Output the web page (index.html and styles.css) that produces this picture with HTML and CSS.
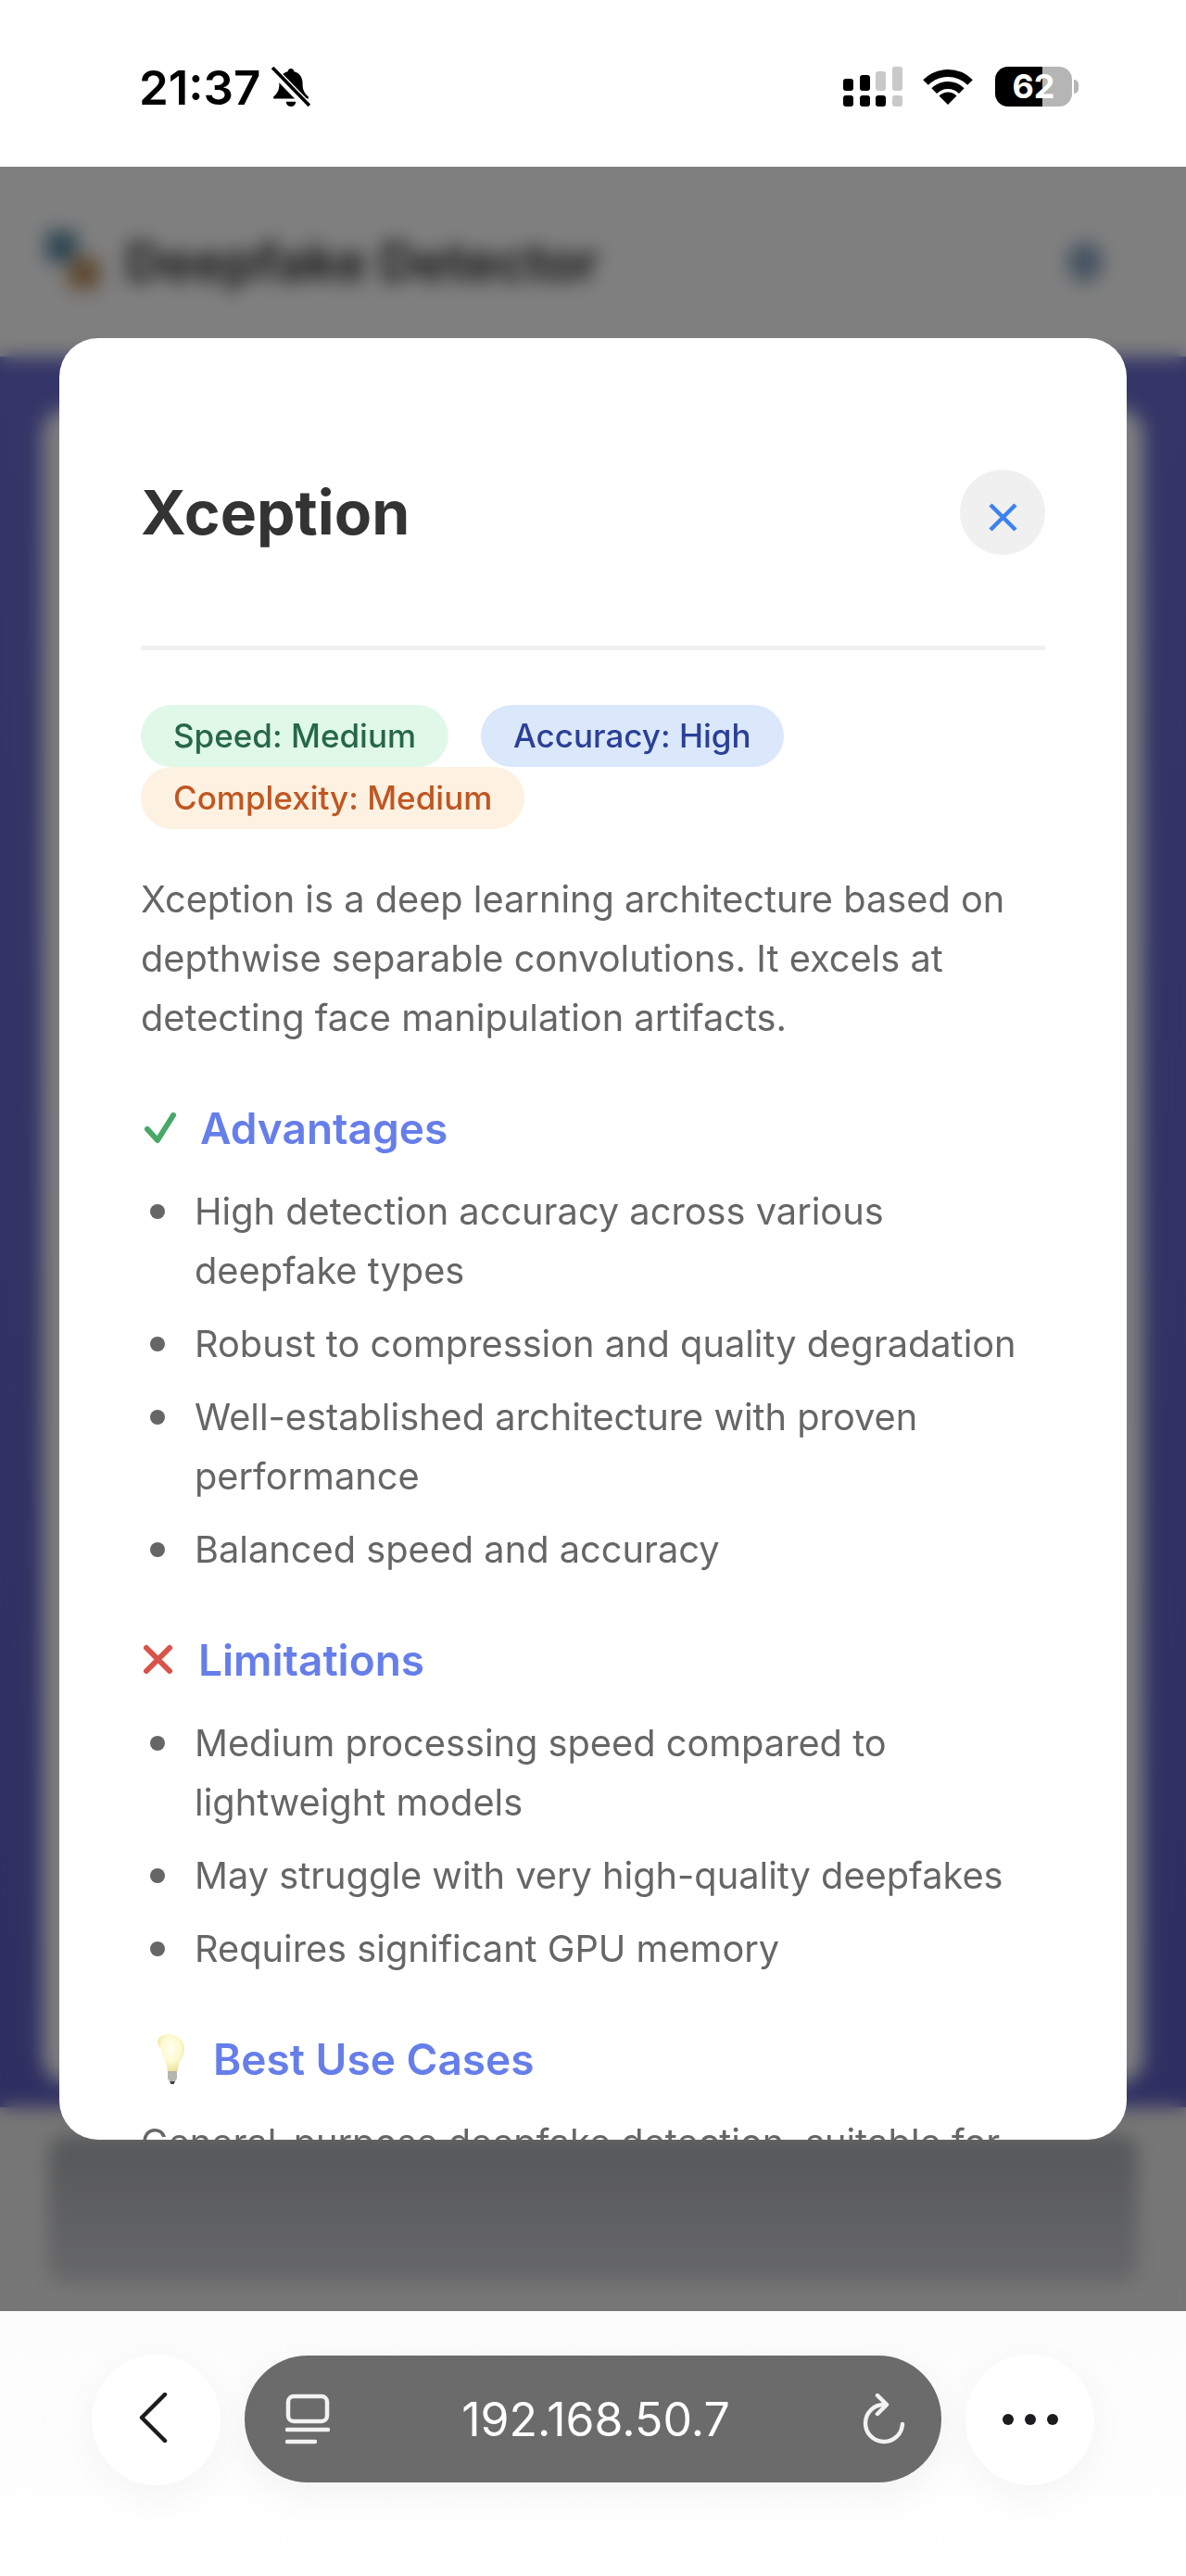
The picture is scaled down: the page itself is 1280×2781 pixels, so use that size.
FILE: index.html
```html
<!DOCTYPE html>
<html lang="en">
<head>
    <meta charset="UTF-8">
    <meta name="viewport" content="width=device-width, initial-scale=1.0">
    <title>Deepfake Detector</title>
    <link rel="stylesheet" href="styles.css">
</head>
<body>
    <div class="status-bar">
        <div class="status-left">
            <span class="clock">21:37</span>
            <svg class="bell" viewBox="0 0 40 42">
                <path d="M20 2c2 0 3 1.500 3.300 3 6 1.500 8.700 6.500 8.700 12 0 7 1.500 10 6 14v2H2v-2c4.500-4 6-7 6-14 0-5.500 2.700-10.500 8.700-12C17 3.500 18 2 20 2z"/>
                <path d="M15 36h10a5 5 0 0 1-10 0z"/>
                <path class="bell-gap" d="M2 4l36 37"/>
                <path class="bell-slash" d="M1 1l38 39"/>
            </svg>
        </div>
        <div class="status-right">
            <svg class="signal" viewBox="0 0 64 43">
                <rect x="0" y="13" width="11" height="13" rx="3"/>
                <rect x="18" y="9" width="11" height="17" rx="3"/>
                <rect class="off" x="35" y="5" width="11" height="21" rx="3"/>
                <rect class="off" x="53" y="0" width="11" height="26" rx="3"/>
                <rect x="0" y="31" width="11" height="12" rx="3"/>
                <rect x="18" y="31" width="11" height="12" rx="3"/>
                <rect x="35" y="31" width="11" height="12" rx="3"/>
                <rect class="off" x="53" y="31" width="11" height="12" rx="3"/>
            </svg>
            <svg class="wifi" viewBox="0 0 56 40">
                <path d="M4 16a34 34 0 0 1 48 0"/>
                <path d="M13.200 25.200a21 21 0 0 1 29.600 0"/>
                <path class="wedge" d="M28 40l-9.500-9.500a13.400 13.400 0 0 1 19 0z"/>
            </svg>
            <div class="battery"><span class="battery-level">62</span><i class="battery-nub"></i></div>
        </div>
    </div>

    <div class="viewport">
        <div class="page">
            <header class="page-header">
                <svg class="page-logo" viewBox="0 0 60 60">
                    <rect x="4" y="2" width="28" height="28" fill="#5a8aa4"/>
                    <rect x="24" y="26" width="28" height="28" fill="#bd9060"/>
                </svg>
                <span class="page-title">Deepfake Detector</span>
                <i class="page-dot"></i>
            </header>
            <main class="page-main">
                <div class="page-card"></div>
            </main>
            <footer class="page-footer">
                <div class="footer-card"></div>
            </footer>
        </div>

        <div class="overlay">
            <div class="modal">
                <div class="modal-header">
                    <h2>Xception</h2>
                    <button class="close-btn">
                        <svg viewBox="0 0 92 92"><path d="M33 38l27 27M60 38L33 65"/></svg>
                    </button>
                </div>

                <div class="tags">
                    <span class="tag tag-speed">Speed: Medium</span>
                    <span class="tag tag-accuracy">Accuracy: High</span>
                    <span class="tag tag-complexity">Complexity: Medium</span>
                </div>

                <p class="intro">Xception is a deep learning architecture based on depthwise separable convolutions. It excels at detecting face manipulation artifacts.</p>

                <h3>
                    <svg class="icon-check" viewBox="0 0 64 40"><path d="M7 21l11 12L35 6"/></svg>
                    Advantages
                </h3>
                <ul>
                    <li>High detection accuracy across various deepfake types</li>
                    <li>Robust to compression and quality degradation</li>
                    <li>Well-established architecture with proven performance</li>
                    <li>Balanced speed and accuracy</li>
                </ul>

                <h3>
                    <svg class="icon-cross" viewBox="0 0 62 40"><path d="M6 7l25 25M31 7L6 32"/></svg>
                    Limitations
                </h3>
                <ul>
                    <li>Medium processing speed compared to lightweight models</li>
                    <li>May struggle with very high-quality deepfakes</li>
                    <li>Requires significant GPU memory</li>
                </ul>

                <h3>
                    <svg class="icon-bulb" viewBox="0 0 78 60">
                        <defs>
                            <radialGradient id="glass" cx="50%" cy="40%" r="60%">
                                <stop offset="0" stop-color="#fffff4"/>
                                <stop offset="0.6" stop-color="#fdf9cf"/>
                                <stop offset="1" stop-color="#ece29a"/>
                            </radialGradient>
                        </defs>
                        <path fill="url(#glass)" d="M30 2c9.500 0 17 7.500 17 16.500 0 7-5 11-6.500 17.500-.5 2.500-.5 4-1 6H29c-.5-2-.5-3.500-1-6-1.500-6.500-6-10.500-6-17.500C13 9.500 20.500 2 30 2z" transform="translate(0 1)"/>
                        <path fill="#b4b4b0" d="M29 43h10v8l-2 3h-6l-2-3z"/>
                        <path fill="#444" d="M31 54h6l-1.500 3h-3z"/>
                    </svg>
                    Best Use Cases
                </h3>
                <p class="use-cases">General-purpose deepfake detection, suitable for most applications.</p>
            </div>
        </div>
    </div>

    <div class="toolbar">
        <button class="round-btn">
            <svg class="icon-back" viewBox="0 0 32 54"><path d="M29 2L4 27l25 25"/></svg>
        </button>
        <div class="url-bar">
            <svg class="icon-tabs" viewBox="0 0 48 56">
                <rect x="3" y="3" width="42" height="27" rx="6"/>
                <path d="M2 39h44M2 52h30"/>
            </svg>
            <span class="url-text">192.168.50.7</span>
            <svg class="icon-reload" viewBox="0 0 48 56">
                <path d="M24 12a20 20 0 1 0 20 21"/>
                <path d="M17 2l10 10-10 10"/>
            </svg>
        </div>
        <button class="round-btn">
            <svg class="icon-more" viewBox="0 0 60 12">
                <circle cx="6" cy="6" r="6"/>
                <circle cx="30" cy="6" r="6"/>
                <circle cx="54" cy="6" r="6"/>
            </svg>
        </button>
    </div>
</body>
</html>
```

FILE: styles.css
```css
* {
    box-sizing: border-box;
}
body {
    margin: 0;
    width: 1280px;
    height: 2781px;
    display: flex;
    flex-direction: column;
    background: #ffffff;
    font-family: 'Inter', 'Liberation Sans', sans-serif;
    overflow: hidden;
}

/* status bar */
.status-bar {
    height: 180px;
    flex-shrink: 0;
    background: #ffffff;
    display: flex;
    justify-content: space-between;
    padding: 72px 123px 0 150px;
}
.status-left {
    display: flex;
    align-items: flex-start;
    gap: 12px;
}
.clock {
    font-size: 51px;
    font-weight: 600;
    line-height: 46px;
    color: #000000;
}
.bell {
    width: 42px;
    height: 44px;
    fill: #000000;
}
.bell-gap {
    fill: none;
    stroke: #ffffff;
    stroke-width: 9;
}
.bell-slash {
    fill: none;
    stroke: #000000;
    stroke-width: 3.5;
}
.status-right {
    display: flex;
    align-items: flex-start;
}
.signal {
    width: 64px;
    height: 43px;
    fill: #000000;
}
.signal .off {
    fill: #c9c9c9;
}
.wifi {
    width: 56px;
    height: 40px;
    margin: 1px 23px 0 21px;
    fill: none;
    stroke: #000000;
    stroke-width: 8;
}
.wifi .wedge {
    fill: #000000;
    stroke: none;
}
.battery {
    width: 83px;
    height: 43px;
    position: relative;
    border-radius: 14px;
    background: linear-gradient(90deg, #000000 62%, #b5b5b5 62%);
    text-align: center;
}
.battery-level {
    font-size: 36px;
    font-weight: 700;
    line-height: 43px;
    color: #ffffff;
}
.battery-nub {
    position: absolute;
    left: 85px;
    top: 14px;
    width: 5px;
    height: 15px;
    border-radius: 0 5px 5px 0;
    background: #b5b5b5;
}

/* page behind the modal */
.viewport {
    flex: 1;
    position: relative;
    overflow: hidden;
}
.page {
    height: 100%;
    display: flex;
    flex-direction: column;
}
.page-header {
    height: 205px;
    background: #ffffff;
    display: flex;
    align-items: center;
    padding: 0 90px 0 45px;
}
.page-logo {
    width: 72px;
    height: 72px;
}
.page-title {
    margin-left: 18px;
    font-size: 56px;
    font-weight: 700;
    color: #333333;
    flex: 1;
}
.page-dot {
    width: 38px;
    height: 44px;
    border-radius: 50%;
    background: #8aa6c4;
}
.page-main {
    flex: 1;
    background: linear-gradient(#6a6cd0, #5e5ec4);
    padding: 55px 46px 25px;
}
.page-card {
    height: 100%;
    background: #ffffff;
    border-radius: 30px;
}
.page-footer {
    height: 220px;
    background: #eeeeee;
    padding: 30px 52px 30px;
}
.footer-card {
    height: 100%;
    background: linear-gradient(#acaeb2, #cecfd3);
    border-radius: 20px;
}
.overlay {
    position: absolute;
    inset: 0;
    display: flex;
    padding: 185px 64px;
    background: rgba(0, 0, 0, 0.5);
    backdrop-filter: blur(10px);
}

/* modal */
.modal {
    flex: 1;
    background: #ffffff;
    border-radius: 42px;
    padding: 142px 88px 0;
    overflow: hidden;
    color: #666666;
    font-size: 39.75px;
    line-height: 64px;
}
.modal-header {
    display: flex;
    justify-content: space-between;
    align-items: center;
    padding-bottom: 98px;
    border-bottom: 5px solid #f0f0f0;
}
.modal-header h2 {
    margin: 0;
    font-size: 66px;
    font-weight: 700;
    line-height: 92px;
    color: #333333;
}
.close-btn {
    width: 92px;
    height: 92px;
    padding: 0;
    border: none;
    border-radius: 50%;
    background: #f0f0f0;
}
.close-btn svg {
    display: block;
    fill: none;
    stroke: #3b82f0;
    stroke-width: 4.5;
}
.tags {
    display: flex;
    flex-wrap: wrap;
    column-gap: 35px;
    margin-top: 59px;
}
.tag {
    height: 67px;
    padding: 0 35px;
    border-radius: 34px;
    font-size: 35px;
    font-weight: 500;
    line-height: 67px;
}
.tag-speed {
    background: #e0f8e8;
    color: #276749;
}
.tag-accuracy {
    background: #dbe8fb;
    color: #2a4098;
}
.tag-complexity {
    background: #fdf1e1;
    color: #c05621;
}
.intro {
    margin: 44px 0 55px;
}
h3 {
    display: flex;
    align-items: center;
    margin: 0 0 26px;
    font-size: 46px;
    font-weight: 600;
    line-height: 64px;
    color: #667eea;
}
h3 svg {
    fill: none;
    stroke-linecap: round;
    stroke-linejoin: round;
    flex-shrink: 0;
}
.icon-check {
    width: 64px;
    height: 40px;
    stroke: #48a868;
    stroke-width: 6;
}
.icon-cross {
    width: 62px;
    height: 40px;
    stroke: #d9534a;
    stroke-width: 6;
}
.icon-bulb {
    width: 78px;
    height: 60px;
    stroke: none;
}
ul {
    margin: 0 0 55px;
    padding: 0;
    list-style: none;
}
li {
    display: flex;
    margin-bottom: 15px;
    padding-left: 10px;
}
li::before {
    content: "";
    flex-shrink: 0;
    width: 16px;
    height: 16px;
    margin: 24px 32px 0 0;
    border-radius: 50%;
    background: #666666;
}
.use-cases {
    margin: 0;
}

/* browser toolbar */
.toolbar {
    height: 286px;
    flex-shrink: 0;
    display: flex;
    align-items: flex-start;
    gap: 26px;
    padding: 47px 0 0 99px;
    background: linear-gradient(#fcfcfc, #fdfdfd 60%, #ffffff);
}
.round-btn {
    width: 139px;
    height: 141px;
    padding: 0;
    border: none;
    border-radius: 50%;
    background: #ffffff;
    box-shadow: 0 10px 40px rgba(0, 0, 0, 0.04);
    display: flex;
    align-items: center;
    justify-content: center;
}
.icon-back {
    width: 32px;
    height: 54px;
    margin: 0 8px 6px 0;
    fill: none;
    stroke: #1c1c1e;
    stroke-width: 4.5;
    stroke-linecap: round;
    stroke-linejoin: round;
}
.icon-more {
    width: 60px;
    height: 12px;
    margin-bottom: 2px;
    fill: #1c1c1e;
}
.url-bar {
    width: 752px;
    height: 137px;
    margin-top: 1px;
    border-radius: 68px;
    background: #6b6b6b;
    display: flex;
    align-items: center;
    justify-content: space-between;
    padding: 0 38px 0 44px;
    box-shadow: 0 10px 40px rgba(0, 0, 0, 0.05);
}
.url-text {
    font-size: 50px;
    color: #ffffff;
}
.icon-tabs, .icon-reload {
    width: 48px;
    height: 56px;
    fill: none;
    stroke: #f2f2f2;
    stroke-width: 4.5;
    stroke-linecap: round;
    stroke-linejoin: round;
}
```
